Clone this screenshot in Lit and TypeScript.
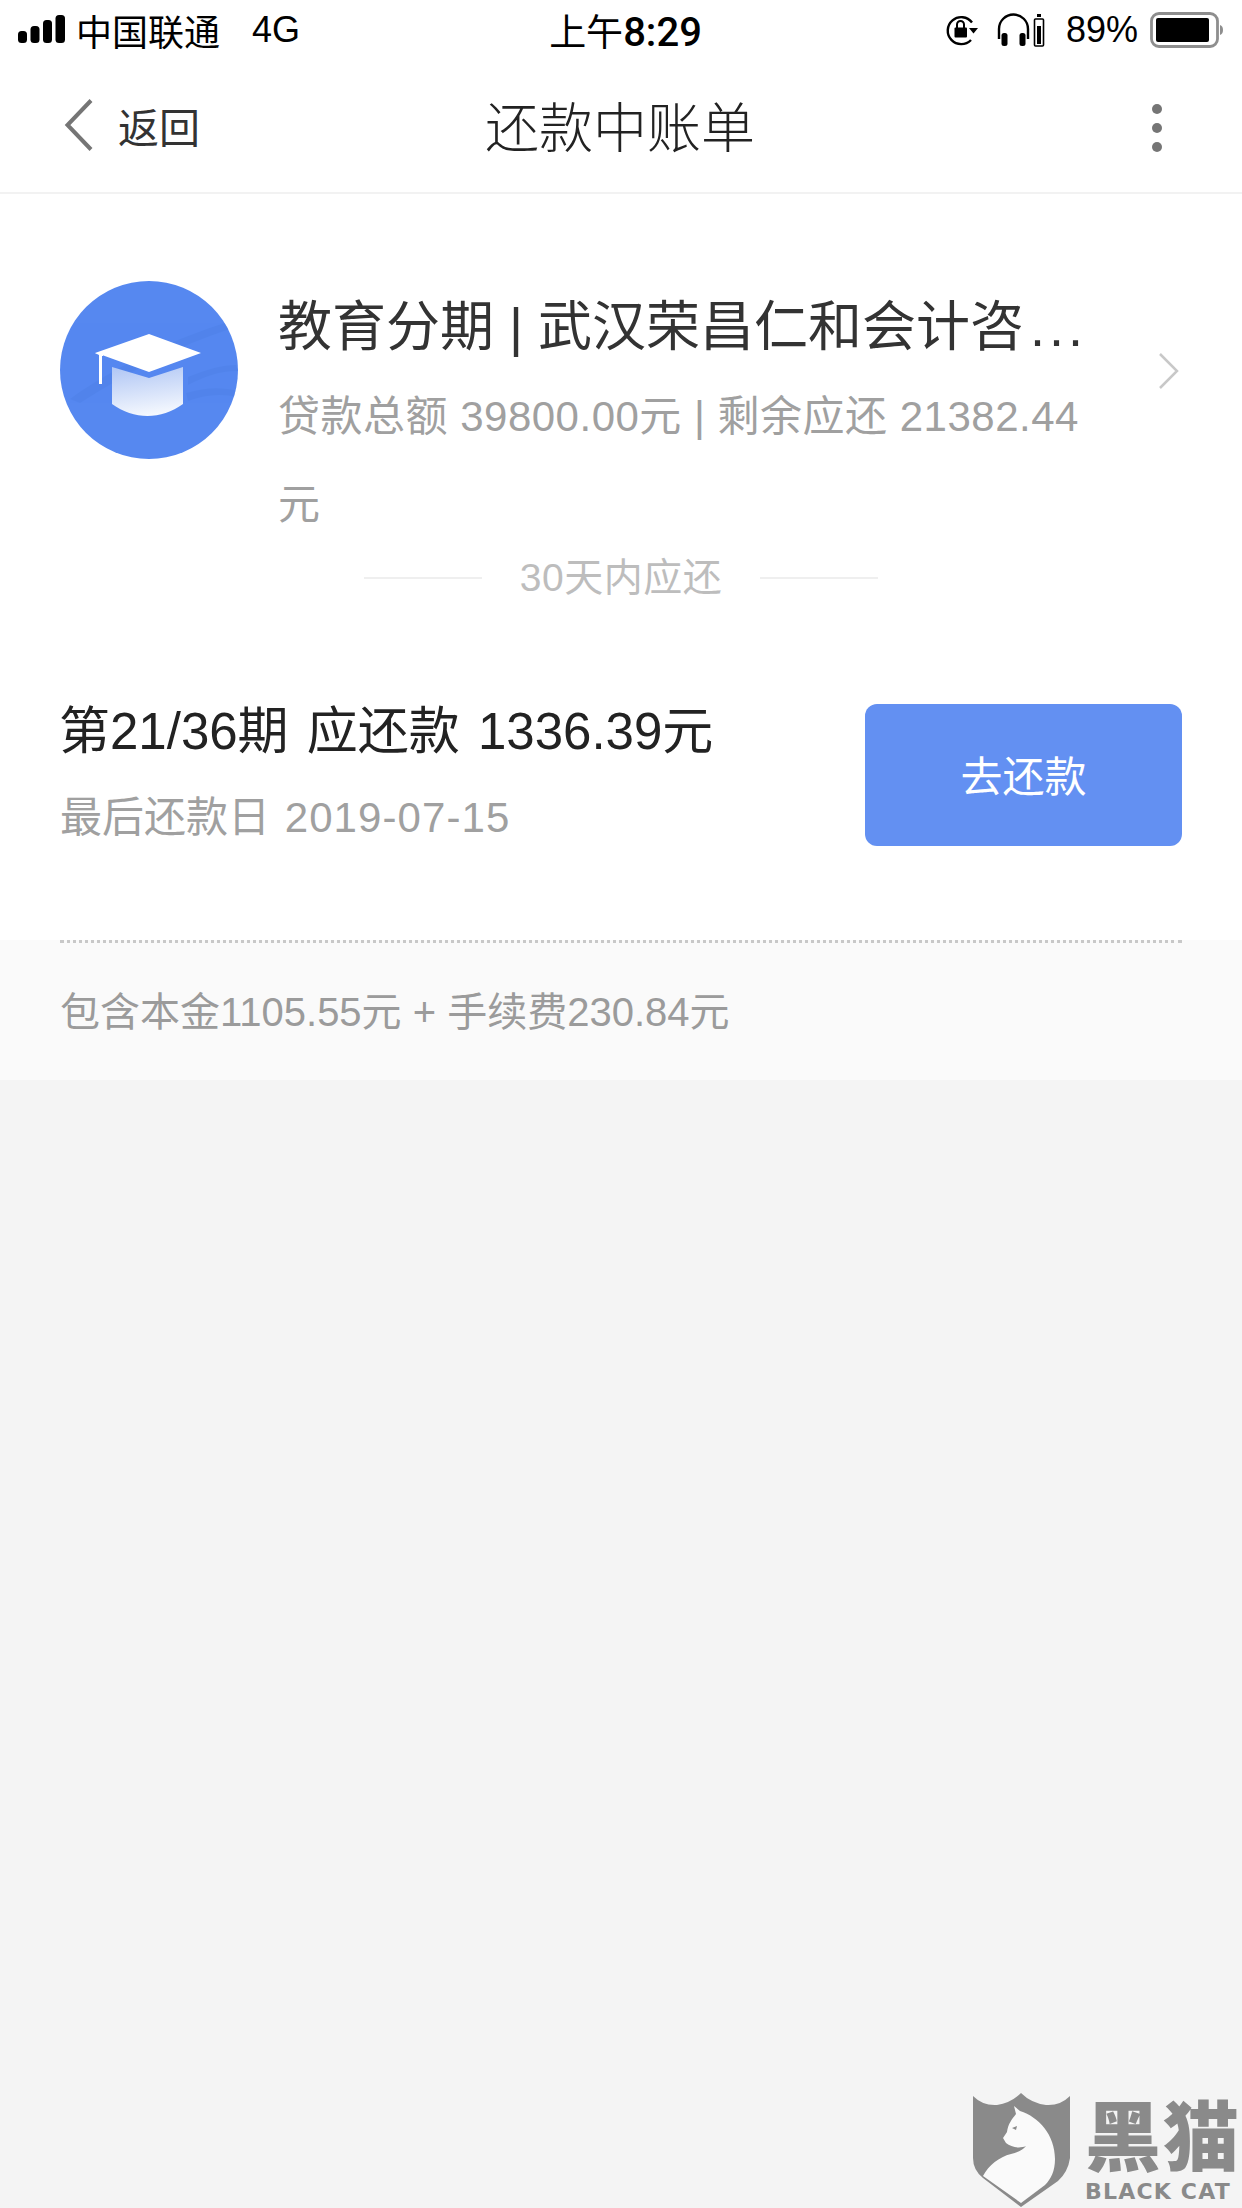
import { LitElement, html, css } from "lit";
import { customElement } from "lit/decorators.js";

@customElement("app-root")
export class AppRoot extends LitElement {
  static styles = css`
    :host {
      display: block;
      width: 1242px;
      height: 2208px;
      position: relative;
      overflow: hidden;
      background: #f4f4f4;
      font-family: "Liberation Sans", "Noto Sans CJK SC", sans-serif;
      color: #222;
    }
    .status {
      height: 62px;
      box-sizing: border-box;
      background: #fff;
      display: grid;
      grid-template-columns: 1fr auto 1fr;
      align-items: center;
      padding: 0 19px 2px 18px;
      color: #000;
      font-size: 36px;
    }
    .st-left, .st-right { display: flex; align-items: center; }
    .st-right { justify-content: flex-end; }
    .carrier { margin-left: 10px; }
    .net { margin-left: 32px; }
    .time { font-size: 37px; display: flex; align-items: baseline; margin-left: 10px; }
    .digits { font-family: Roboto, sans-serif; font-weight: 500; font-size: 40px; }
    .pct { margin: 0 12px 0 19px; }
    .nav {
      height: 132px;
      box-sizing: border-box;
      background: #fff;
      border-bottom: 2px solid #f2f2f2;
      display: grid;
      grid-template-columns: 1fr auto 1fr;
      align-items: center;
      padding: 0 60px 4px 64px;
    }
    .back { display: flex; align-items: center; gap: 24px; font-size: 41px; color: #333; margin-top: -1px; }
    .nav-title { font-size: 54px; color: #222; font-weight: 300; margin: -2px 0 0 -6px; }
    .more { justify-self: end; display: flex; flex-direction: column; gap: 9px; margin: 5px 20px 0 0; }
    .more i { width: 10px; height: 10px; border-radius: 50%; background: #757575; display: block; }
    .main { background: #fff; padding: 87px 60px 0; height: 746px; box-sizing: border-box; }
    .loan { display: flex; align-items: flex-start; height: 275px; }
    .avatar { width: 178px; height: 178px; flex: none; }
    .loan-text { margin-left: 40px; width: 830px; }
    .loan-title {
      font-size: 54px;
      line-height: 88px;
      height: 88px;
      margin-top: 2px;
      color: #333;
      white-space: nowrap;
    }
    .ell { letter-spacing: 4px; margin-left: 6px; }
    .loan-sub { font-size: 42px; line-height: 88px; color: #a0a0a0; letter-spacing: 0.5px; margin-top: 2px; }
    .chev { margin-left: auto; margin-right: 2px; margin-top: 71px; flex: none; }
    .due-head {
      display: flex;
      align-items: center;
      justify-content: center;
      gap: 38px;
      font-size: 39px;
      line-height: 44px;
      letter-spacing: 0.5px;
      color: #bdbdbd;
    }
    .due-head i { width: 118px; height: 2px; background: #efefef; display: block; }
    .bill { display: flex; justify-content: space-between; align-items: center; margin-top: 102px; }
    .bill-title { font-size: 51px; line-height: 60px; color: #222; word-spacing: 4px; margin-left: -1px; }
    .bill-date { font-size: 42px; line-height: 60px; color: #a0a0a0; margin-top: 26px; }
    .num { letter-spacing: 1.100px; margin-left: 3px; }
    .pay {
      width: 317px;
      height: 142px;
      box-sizing: border-box;
      padding-bottom: 3px;
      border-radius: 12px;
      background: #6390f2;
      color: #fff;
      font-size: 42px;
      display: flex;
      align-items: center;
      justify-content: center;
    }
    .fee {
      height: 140px;
      box-sizing: border-box;
      background: #fafafa;
      padding: 0 60px 2px;
      position: relative;
      display: flex;
      align-items: center;
      font-size: 40px;
      color: #9b9b9b;
    }
    .dots {
      position: absolute;
      left: 60px;
      right: 60px;
      top: 0;
      height: 3px;
      border-top: 3px dotted #c8c8c8;
    }
    .mark { position: absolute; left: 973px; top: 2093px; display: flex; gap: 15px; }
    .mark-text { display: flex; flex-direction: column; color: #8a8a8a; margin-top: 9px; }
    .mark-cn { font-size: 76px; line-height: 74px; font-weight: 900; letter-spacing: 2px; white-space: nowrap; }
    .mark-en {
      font-family: "DejaVu Sans", sans-serif;
      font-size: 22px;
      font-weight: 700;
      line-height: 24px;
      margin-top: 4px;
      letter-spacing: 1.200px;
      white-space: nowrap;
    }
  `;

  render() {
    return html`
      <div class="status">
        <div class="st-left">
          <svg width="48" height="30" viewBox="0 0 48 30">
            <rect x="0" y="16" width="9" height="12" rx="3.5" fill="#000"/>
            <rect x="12.500" y="11" width="9" height="17" rx="3.5" fill="#000"/>
            <rect x="25" y="5" width="9" height="23" rx="3.5" fill="#000"/>
            <rect x="37.500" y="0" width="9.500" height="28" rx="3.5" fill="#000"/>
          </svg>
          <span class="carrier">中国联通</span><span class="net">4G</span>
        </div>
        <div class="time"><span>上午</span><span class="digits">8:29</span></div>
        <div class="st-right">
          <svg width="34" height="34" viewBox="0 0 34 34" fill="none">
            <path d="M27 9.500A13.500 13.500 0 1 0 26 27" stroke="#000" stroke-width="2.400"/>
            <path d="M24 15h9l-4.500 5.500z" fill="#000"/>
            <rect x="9.500" y="14.500" width="12.500" height="10" rx="1" fill="#000"/>
            <path d="M12 15v-3.500a3.500 3.500 0 0 1 7 0V15" stroke="#000" stroke-width="2"/>
          </svg>
          <svg style="margin-left:18px" width="50" height="34" viewBox="0 0 50 34" fill="none">
            <path d="M2 26V16a14.500 14.500 0 0 1 29 0v10" stroke="#000" stroke-width="2.400"/>
            <rect x="4.500" y="20" width="6" height="13" rx="2.500" fill="#000"/>
            <rect x="22.500" y="20" width="6" height="13" rx="2.500" fill="#000"/>
            <rect x="37.500" y="6" width="9" height="27" rx="1" stroke="#000" stroke-width="1.600"/>
            <rect x="40" y="13" width="4" height="18" fill="#000"/>
            <rect x="40" y="1" width="4" height="3" fill="#000"/>
          </svg>
          <span class="pct">89%</span>
          <svg width="73" height="36" viewBox="0 0 73 36" fill="none">
            <rect x="1.500" y="1.500" width="66" height="33" rx="7.500" stroke="#8e8e8e" stroke-width="2.800"/>
            <rect x="6" y="6" width="53" height="24" rx="2" fill="#000"/>
            <path d="M70 13c2 .8 3 2.500 3 5s-1 4.200-3 5z" fill="#8e8e8e"/>
          </svg>
        </div>
      </div>

      <div class="nav">
        <div class="back">
          <svg width="30" height="54" viewBox="0 0 30 54" fill="none">
            <path d="M27 2.500 3.500 27 27 51.500" stroke="#757575" stroke-width="4"/>
          </svg>
          <span>返回</span>
        </div>
        <div class="nav-title">还款中账单</div>
        <div class="more"><i></i><i></i><i></i></div>
      </div>

      <div class="main">
        <div class="loan">
          <svg class="avatar" viewBox="0 0 178 178">
            <defs>
              <linearGradient id="cap" x1="0.35" y1="0" x2="0.55" y2="1">
                <stop offset="0" stop-color="#b4c9f5"/>
                <stop offset="1" stop-color="#f6f9fe"/>
              </linearGradient>
              <clipPath id="disc"><circle cx="89" cy="89" r="89"/></clipPath>
            </defs>
            <circle cx="89" cy="89" r="89" fill="#5688f0"/>
            <g clip-path="url(#disc)" fill="#4f80e8" opacity=".55">
              <path d="M10 118C60 82 120 56 165 42l5 6C120 64 70 90 20 122z"/>
              <path d="M128 96c20-8 34-12 48-12l2 6c-20 0-34 6-50 14z"/>
              <path d="M126 112c20-6 36-6 52-2v6c-18-4-34-2-50 4z"/>
            </g>
            <path d="M52 86l37 11 34-11v37c-22 16-49 16-71 0z" fill="url(#cap)"/>
            <path d="M35 72 89 53l52 19-52 19-47-17z" fill="#fff"/>
            <path d="M35 72h5l3 2v1h-1v28h-3V74z" fill="#fff"/>
          </svg>
          <div class="loan-text">
            <div class="loan-title">教育分期 | 武汉荣昌仁和会计咨<span class="ell">...</span></div>
            <div class="loan-sub">贷款总额 39800.00元 | 剩余应还 21382.44 元</div>
          </div>
          <svg class="chev" width="22" height="38" viewBox="0 0 22 38" fill="none">
            <path d="M2 2 19 19 2 36" stroke="#c8c8c8" stroke-width="2.500"/>
          </svg>
        </div>
        <div class="due-head"><i></i><span>30天内应还</span><i></i></div>
        <div class="bill">
          <div>
            <div class="bill-title">第21/36期 应还款 1336.39元</div>
            <div class="bill-date">最后还款日 <span class="num">2019-07-15</span></div>
          </div>
          <div class="pay">去还款</div>
        </div>
      </div>

      <div class="fee">
        <div class="dots"></div>
        包含本金1105.55元 + 手续费230.84元
      </div>

      <div class="mark">
        <svg width="97" height="114" viewBox="0 0 97 114">
          <path d="M0 3Q10 13 24 12Q38 10 48 0Q58 10 73 12Q87 13 97 3V65Q95 79 85 88L48 114 10 85Q0 77 0 65z" fill="#8a8a8a"/>
          <path d="M41 13L47 18C66 24 82 42 82 66C82 78 78 86 72 92L48 110 10 83C16 72 26 64 38 61C45 59 50 57 53 53C46 56 38 54 33 50L30 45L34 39C35 31 39 26 43 21z" fill="#fafafa"/>
          <path d="M39 35l5-2-1 4z" fill="#8a8a8a"/>
        </svg>
        <div class="mark-text">
          <div class="mark-cn">黑猫</div>
          <div class="mark-en">BLACK CAT</div>
        </div>
      </div>
    `;
  }
}
